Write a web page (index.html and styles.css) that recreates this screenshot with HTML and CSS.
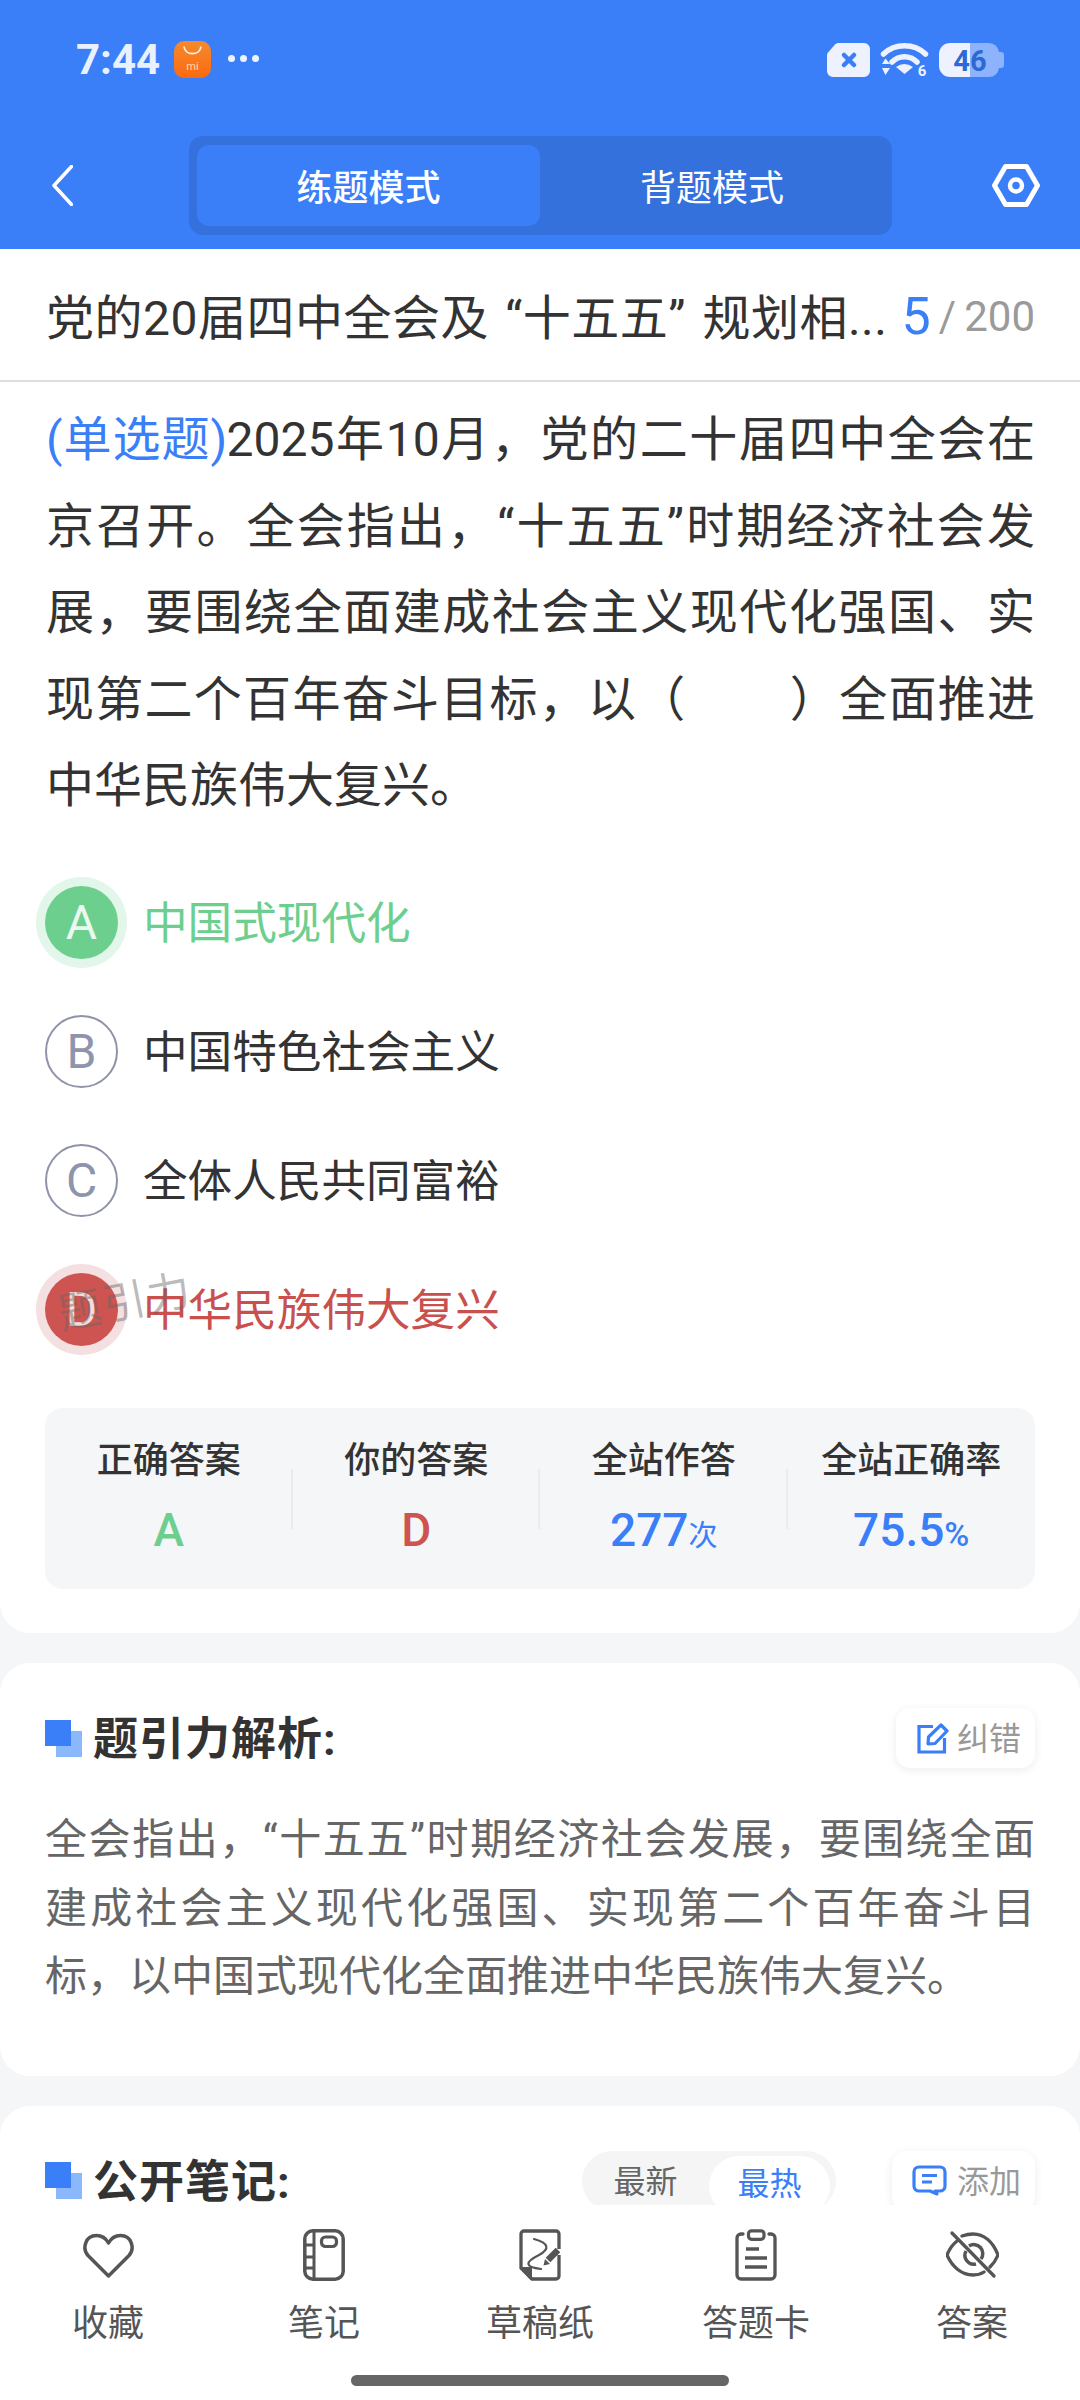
FILE: index.html
```html
<!DOCTYPE html>
<html lang="zh-CN">
<head>
    <meta charset="UTF-8">
    <meta name="viewport" content="width=device-width, initial-scale=1.0">
    <title>练题模式</title>
    <link rel="stylesheet" href="styles.css">
</head>
<body>
    <!-- 顶部 -->
    <header class="top">
        <div class="status">
            <div class="status-left">
                <span class="time">7:44</span>
                <svg class="mi-icon" viewBox="0 0 37 37">
                    <defs>
                        <linearGradient id="miBg" x1="0" y1="0" x2="0" y2="1">
                            <stop offset="0" stop-color="#f58a2c"/>
                            <stop offset="1" stop-color="#fb6a10"/>
                        </linearGradient>
                    </defs>
                    <rect width="37" height="37" rx="10" fill="url(#miBg)"/>
                    <path d="M10 5.500 C11 15 26 15 27 5.500" fill="none" stroke="#fff3e0" stroke-width="1.800"/>
                    <text x="18.500" y="29" text-anchor="middle" class="mi-text">mi</text>
                </svg>
                <span class="dots"><i></i><i></i><i></i></span>
            </div>
            <div class="status-right">
                <svg width="43" height="34" viewBox="0 0 43 34">
                    <path d="M11 0 H37 A6 6 0 0 1 43 6 V28 A6 6 0 0 1 37 34 H6 A6 6 0 0 1 0 28 V12 A4 4 0 0 1 1.500 9 L8 1.500 A4 4 0 0 1 11 0 Z" fill="#edf2fe"/>
                    <path d="M17 12 L27 22 M27 12 L17 22" stroke="#3a7ef8" stroke-width="4.500" stroke-linecap="round"/>
                </svg>
                <svg class="wifi" width="47" height="35" viewBox="0 0 47 35">
                    <path d="M2.500 12 C14 1 33 1 44.500 12" fill="none" stroke="#edf2fe" stroke-width="5.500" stroke-linecap="round"/>
                    <path d="M11 20 C18 13 29 13 36 20" fill="none" stroke="#edf2fe" stroke-width="5.500" stroke-linecap="round"/>
                    <path d="M15 25 Q23 19 32 25 L23.500 32 Z" fill="#edf2fe"/>
                    <path d="M1 22 L4.500 16.500 L9 22 Z M1 26 L9 26 L4.500 33 Z" fill="#edf2fe"/>
                    <text x="41" y="34" text-anchor="middle" class="wifi-text">6</text>
                </svg>
                <svg width="65" height="34" viewBox="0 0 65 34">
                    <path d="M31 0 H50 A10 10 0 0 1 60 9 H62 A3 3 0 0 1 65 12 V22 A3 3 0 0 1 62 25 H60 A10 10 0 0 1 50 34 H31 Z" fill="#8cb3fb"/>
                    <path d="M31 0 H11 A11 11 0 0 0 0 11 V23 A11 11 0 0 0 11 34 H31 Z" fill="#edf2fe"/>
                    <text x="31" y="27.500" text-anchor="middle" class="battery-text">46</text>
                </svg>
            </div>
        </div>
        <nav class="nav">
            <div class="nav-back">
                <svg width="21" height="41" viewBox="0 0 21 41">
                    <path d="M19.500 1.500 L2 20.500 L19.500 39.500" fill="none" stroke="#fff" stroke-width="3.500" stroke-linecap="round" stroke-linejoin="round"/>
                </svg>
            </div>
            <div class="mode">
                <span class="mode-item active">练题模式</span>
                <span class="mode-item">背题模式</span>
            </div>
            <div class="nav-set">
                <svg width="48" height="43" viewBox="0 0 48 43">
                    <path d="M13.500 2.500 H34.500 L45.500 21.500 L34.500 40.500 H13.500 L2.500 21.500 Z" fill="none" stroke="#fff" stroke-width="5" stroke-linejoin="round"/>
                    <circle cx="24" cy="21.500" r="6" fill="none" stroke="#fff" stroke-width="4.500"/>
                </svg>
            </div>
        </nav>
    </header>

    <main class="content">
        <section class="card card-first">
            <div class="paper-title">
                <span class="paper-name">党的20届四中全会及 “十五五” 规划相...</span>
                <span class="paper-count"><b>5</b><i>/</i>200</span>
            </div>
            <p class="question"><span class="qtype">(单选题)</span>2025年10月，党的二十届四中全会在京召开。全会指出，“十五五”时期经济社会发展，要围绕全面建成社会主义现代化强国、实现第二个百年奋斗目标，以（<span class="blank"></span>）全面推进中华民族伟大复兴。</p>

            <ul class="options">
                <li class="option right"><span class="letter">A</span><span class="option-text">中国式现代化</span></li>
                <li class="option"><span class="letter">B</span><span class="option-text">中国特色社会主义</span></li>
                <li class="option"><span class="letter">C</span><span class="option-text">全体人民共同富裕</span></li>
                <li class="option wrong"><span class="letter">D</span><span class="option-text">中华民族伟大复兴</span><span class="watermark">题引力</span></li>
            </ul>

            <div class="stats">
                <div class="stat">
                    <div class="stat-label">正确答案</div>
                    <div class="stat-value green">A</div>
                </div>
                <div class="stat">
                    <div class="stat-label">你的答案</div>
                    <div class="stat-value red">D</div>
                </div>
                <div class="stat">
                    <div class="stat-label">全站作答</div>
                    <div class="stat-value blue">277<small>次</small></div>
                </div>
                <div class="stat">
                    <div class="stat-label">全站正确率</div>
                    <div class="stat-value blue">75.5<small class="pct">%</small></div>
                </div>
            </div>
        </section>

        <section class="card card-block">
            <div class="block-head">
                <h3 class="block-title"><span class="mark"></span>题引力解析:</h3>
                <span class="tool-btn">
                    <svg width="32" height="31" viewBox="0 0 32 31">
                        <path d="M16 3.500 H2 V29 H27.500 V15" fill="none" stroke="#3a7ef8" stroke-width="3.200"/>
                        <path d="M11 21 L11.500 14 L24 2 L30 8 L18 20.500 Z" fill="none" stroke="#3a7ef8" stroke-width="3.200" stroke-linejoin="round"/>
                    </svg>
                    纠错
                </span>
            </div>
            <p class="analysis">全会指出，“十五五”时期经济社会发展，要围绕全面建成社会主义现代化强国、实现第二个百年奋斗目标，以中国式现代化全面推进中华民族伟大复兴。</p>
        </section>

        <section class="card card-block">
            <div class="block-head">
                <h3 class="block-title"><span class="mark"></span>公开笔记:</h3>
                <div class="note-tools">
                    <div class="sort">
                        <span class="sort-item">最新</span>
                        <span class="sort-item active">最热</span>
                    </div>
                    <span class="tool-btn add-btn">
                        <svg width="35" height="31" viewBox="0 0 35 31">
                            <path d="M7 2 H28 A5 5 0 0 1 33 7 V21 A5 5 0 0 1 28 26 H23 L25 29 L18 26 H7 A5 5 0 0 1 2 21 V7 A5 5 0 0 1 7 2 Z" fill="none" stroke="#3a7ef8" stroke-width="3.200" stroke-linejoin="round"/>
                            <path d="M10 10.500 H25 M10 17 H20" stroke="#3a7ef8" stroke-width="3.200"/>
                        </svg>
                        添加
                    </span>
                </div>
            </div>
        </section>
    </main>

    <!-- 底部菜单 -->
    <footer class="bottom">
        <div class="tabs">
            <div class="tab">
                <svg width="51" height="52" viewBox="0 0 51 52">
                    <path d="M25.500 47 L5 26.500 C-1 20 2 6.500 13.500 6.500 C19 6.500 23 9.500 25.500 14 C28 9.500 32 6.500 37.500 6.500 C49 6.500 52 20 46 26.500 Z" fill="none" stroke="#555" stroke-width="3.500" stroke-linejoin="round"/>
                </svg>
                <span>收藏</span>
            </div>
            <div class="tab">
                <svg width="42" height="52" viewBox="0 0 42 52">
                    <rect x="1.800" y="1.800" width="38.400" height="48.400" rx="8" fill="none" stroke="#555" stroke-width="3.500"/>
                    <path d="M11 2 V50 M2 16 H11 M2 28 H11 M2 39 H11" fill="none" stroke="#555" stroke-width="3"/>
                    <rect x="18.500" y="8" width="15" height="9.500" rx="4" fill="none" stroke="#555" stroke-width="3.200"/>
                </svg>
                <span>笔记</span>
            </div>
            <div class="tab">
                <svg width="42" height="52" viewBox="0 0 42 52">
                    <path d="M40 20 V5 A3 3 0 0 0 37 2 H5 A3 3 0 0 0 2 5 V39 L13 50 H37 A3 3 0 0 0 40 47 V26" fill="none" stroke="#555" stroke-width="3.300"/>
                    <path d="M2 39 H12 V50 Z" fill="#555" stroke="#555" stroke-width="2" stroke-linejoin="round"/>
                    <path d="M15 10 C30 14 31 20 20 26 C6 33 5 38 22 40" fill="none" stroke="#555" stroke-width="2.200" stroke-linecap="round"/>
                    <path d="M29 31 L39 21" stroke="#555" stroke-width="6.500"/>
                    <path d="M24.500 36.500 L26 30 L31 35 Z" fill="#555"/>
                </svg>
                <span>草稿纸</span>
            </div>
            <div class="tab">
                <svg width="42" height="52" viewBox="0 0 42 52">
                    <path d="M8 5 H6 A4 4 0 0 0 2 9 V46 A4 4 0 0 0 6 50 H36 A4 4 0 0 0 40 46 V9 A4 4 0 0 0 36 5 H34" fill="none" stroke="#555" stroke-width="3.300" stroke-linecap="round"/>
                    <rect x="13.500" y="1.800" width="15.500" height="8.500" rx="3" fill="none" stroke="#555" stroke-width="3.200"/>
                    <path d="M11 20 H24 M10 29 H32 M10 38 H32" stroke="#555" stroke-width="3.300"/>
                </svg>
                <span>答题卡</span>
            </div>
            <div class="tab">
                <svg width="53" height="52" viewBox="0 0 53 52">
                    <g transform="translate(0 3)">
                        <path d="M11 9 C6 13 3 18 1 23 C6 35 16 43 27 43 C31 43 35 42 38 40 M16 4 C19 3 23 2 27 2 C38 2 47 10 52 23 C50 28 47 32 44 35" fill="none" stroke="#555" stroke-width="3.300" stroke-linecap="round"/>
                        <path d="M6 1 L48 44" stroke="#555" stroke-width="3.300" stroke-linecap="round"/>
                        <path d="M20 19 A9 9 0 0 0 30 32 M23 14 A9 9 0 0 1 35 27" fill="none" stroke="#555" stroke-width="3.500"/>
                    </g>
                </svg>
                <span>答案</span>
            </div>
        </div>
        <div class="home-bar"></div>
    </footer>
</body>
</html>
```

FILE: styles.css
```css
* {
    box-sizing: border-box;
}

body {
    margin: 0;
    width: 1080px;
    height: 2400px;
    display: flex;
    flex-direction: column;
    overflow: hidden;
    font-family: Roboto, "Noto Sans CJK SC", sans-serif;
    color: #333;
    background-color: #f5f6f8;
}

/* Header */
.top {
    flex: none;
    height: 249px;
    background-color: #3a7ef8;
}

.status {
    height: 136px;
    padding: 41px 76px 0 76px;
    display: flex;
    justify-content: space-between;
    align-items: flex-start;
}

.status-left {
    display: flex;
    align-items: center;
    height: 37px;
}

.time {
    font-size: 42px;
    line-height: 37px;
    font-weight: 700;
    color: #e9f1ff;
}

.mi-icon {
    width: 37px;
    height: 37px;
    margin-left: 14px;
}

.mi-text {
    font-size: 11px;
    font-family: Roboto, sans-serif;
    fill: #ffd9b0;
}

.dots {
    display: flex;
    gap: 5px;
    margin-left: 17px;
    margin-top: -2px;
}

.dots i {
    width: 7px;
    height: 7px;
    border-radius: 50%;
    background-color: #edf2fe;
}

.status-right {
    display: flex;
    align-items: center;
    gap: 11px;
    height: 35px;
    margin-top: 1px;
}

.wifi {
    overflow: visible;
}

.wifi-text {
    font-size: 15px;
    font-weight: 700;
    font-family: Roboto, sans-serif;
    fill: #edf2fe;
}

.battery-text {
    font-size: 29px;
    font-weight: 700;
    font-family: Roboto, sans-serif;
    fill: #2d68d4;
}

.nav {
    height: 99px;
    display: grid;
    grid-template-columns: 189px 703px 1fr;
    align-items: center;
}

.nav-back {
    padding-left: 52px;
    display: flex;
}

.nav-set {
    padding-right: 40px;
    display: flex;
    justify-content: flex-end;
}

.mode {
    height: 99px;
    padding: 9px 8px;
    display: flex;
    background-color: #3571dd;
    border-radius: 14px;
}

.mode-item {
    flex: 1;
    display: flex;
    align-items: center;
    justify-content: center;
    padding-bottom: 2px;
    font-size: 36px;
    color: #fff;
    border-radius: 12px;
}

.mode-item.active {
    flex: none;
    width: 343px;
    font-weight: 500;
    background-color: #3a7ef8;
}

/* Content */
.content {
    flex: 1;
    overflow: hidden;
}

.card {
    background-color: #fff;
    border-radius: 30px;
    margin-bottom: 30px;
}

.card-first {
    border-radius: 0 0 30px 30px;
    height: 1384px;
}

.paper-title {
    height: 133px;
    padding: 0 45px 2px 46px;
    display: flex;
    align-items: center;
    justify-content: space-between;
    border-bottom: 2px solid #ddd;
    white-space: nowrap;
}

.paper-name {
    font-size: 48px;
    letter-spacing: 0.5px;
    word-spacing: 4px;
}

.paper-count {
    margin-top: 5px;
    font-size: 42px;
    color: #9a9a9a;
}

.paper-count b {
    font-size: 52px;
    font-weight: 400;
    color: #3a7ef8;
    vertical-align: -3px;
    line-height: 42px;
}

.paper-count i {
    font-style: normal;
    margin: 0 8px;
}

.question {
    margin: 15px 45px 0 46px;
    font-size: 48px;
    line-height: 86.500px;
    text-align: justify;
}

.qtype {
    color: #3a7ef8;
    letter-spacing: -0.6px;
}

.blue {
    color: #3a7ef8;
}

.green {
    color: #6ccf8e;
}

.red {
    color: #cd5450;
}

.blank {
    display: inline-block;
    width: 102px;
}

.options {
    list-style: none;
    margin: 28px 0 0;
    padding: 0 0 0 45px;
}

.option {
    position: relative;
    height: 129px;
    display: flex;
    align-items: center;
    gap: 25px;
    font-size: 44.600px;
}

.option-text {
    margin-bottom: 6px;
}

.letter {
    flex: none;
    width: 73px;
    height: 73px;
    display: flex;
    align-items: center;
    justify-content: center;
    font-size: 48px;
    color: #8f94ad;
    border: 2px solid #8f93a8;
    border-radius: 50%;
}

.option.right {
    color: #6ccf8e;
}

.option.right .letter {
    color: #eafaf0;
    background-color: #6ccf8e;
    border: none;
    box-shadow: 0 0 0 9px #e2f6ea;
}

.option.wrong {
    color: #c9504d;
}

.option.wrong .letter {
    color: #f6dcdc;
    background-color: #cd5450;
    border: none;
    box-shadow: 0 0 0 9px #f5e0e1;
}

.watermark {
    position: absolute;
    left: 12px;
    top: 22px;
    font-size: 43px;
    letter-spacing: 2px;
    color: rgba(100, 100, 100, 0.45);
    transform: rotate(-11deg);
    white-space: nowrap;
}

.stats {
    margin: 34px 45px 0;
    height: 181px;
    padding-top: 27px;
    display: flex;
    background-color: #f5f6f8;
    border-radius: 18px;
}

.stat {
    position: relative;
    flex: 1;
    text-align: center;
}

/* 分隔线 */
.stat + .stat::before {
    content: "";
    position: absolute;
    left: -2px;
    top: 34px;
    width: 2px;
    height: 60px;
    background-color: #eaebee;
}

.stat-label {
    font-size: 36px;
    line-height: 52px;
    font-weight: 500;
}

.stat-value {
    margin-top: 16px;
    font-size: 46px;
    line-height: 54px;
    font-weight: 500;
}

.stat-value small {
    font-size: 29px;
    font-weight: 400;
}

.stat-value small.pct {
    font-size: 34px;
    font-weight: 500;
}

.card-block {
    padding: 45px 45px 64px 45px;
}

.block-head {
    height: 60px;
    display: flex;
    align-items: center;
    justify-content: space-between;
}

.block-title {
    margin: 0;
    padding-bottom: 5px;
    display: flex;
    align-items: center;
    font-size: 45px;
    font-weight: 700;
    letter-spacing: 1px;
}

.mark {
    width: 37px;
    height: 37px;
    margin-top: 5px;
    margin-right: 11px;
    background: linear-gradient(#3a7ef8, #3a7ef8) 0 0 / 26px 26px no-repeat,
                linear-gradient(#8bb8fb, #8bb8fb) 100% 100% / 26px 26px no-repeat;
}

.tool-btn {
    height: 60px;
    padding: 0 14px 4px 21px;
    display: flex;
    align-items: center;
    gap: 8px;
    font-size: 32px;
    color: #999;
    background-color: #fff;
    border-radius: 14px;
    box-shadow: 0 2px 10px rgba(0, 0, 0, 0.08);
}

.tool-btn svg {
    margin-top: 4px;
}

.add-btn {
    padding-left: 20px;
    gap: 10px;
}

.analysis {
    margin: 38px 0 0;
    font-size: 42px;
    line-height: 68.500px;
    color: #666;
    text-align: justify;
}

.note-tools {
    display: flex;
    align-items: center;
    gap: 56px;
}

.sort {
    width: 254px;
    height: 60px;
    padding: 5px 6px 0 0;
    display: flex;
    background-color: #f5f5f5;
    border-radius: 30px;
}

.sort-item {
    flex: 1;
    display: flex;
    align-items: center;
    justify-content: center;
    font-size: 32px;
    color: #666;
    padding-bottom: 9px;
}

.sort-item.active {
    flex: none;
    width: 121px;
    height: 60px;
    color: #3a7ef8;
    background-color: #fff;
    border-radius: 30px;
}

/* Bottom bar */
.bottom {
    flex: none;
    height: 195px;
    background-color: #fff;
}

.tabs {
    display: flex;
    padding-top: 24px;
}

.tab {
    flex: 1;
    display: flex;
    flex-direction: column;
    align-items: center;
    gap: 18px;
    font-size: 36px;
    line-height: 50px;
    color: #555;
}

.tab svg {
    display: block;
}

.home-bar {
    width: 378px;
    height: 11px;
    margin: 26px auto 0;
    background-color: #666;
    border-radius: 6px;
}
```
